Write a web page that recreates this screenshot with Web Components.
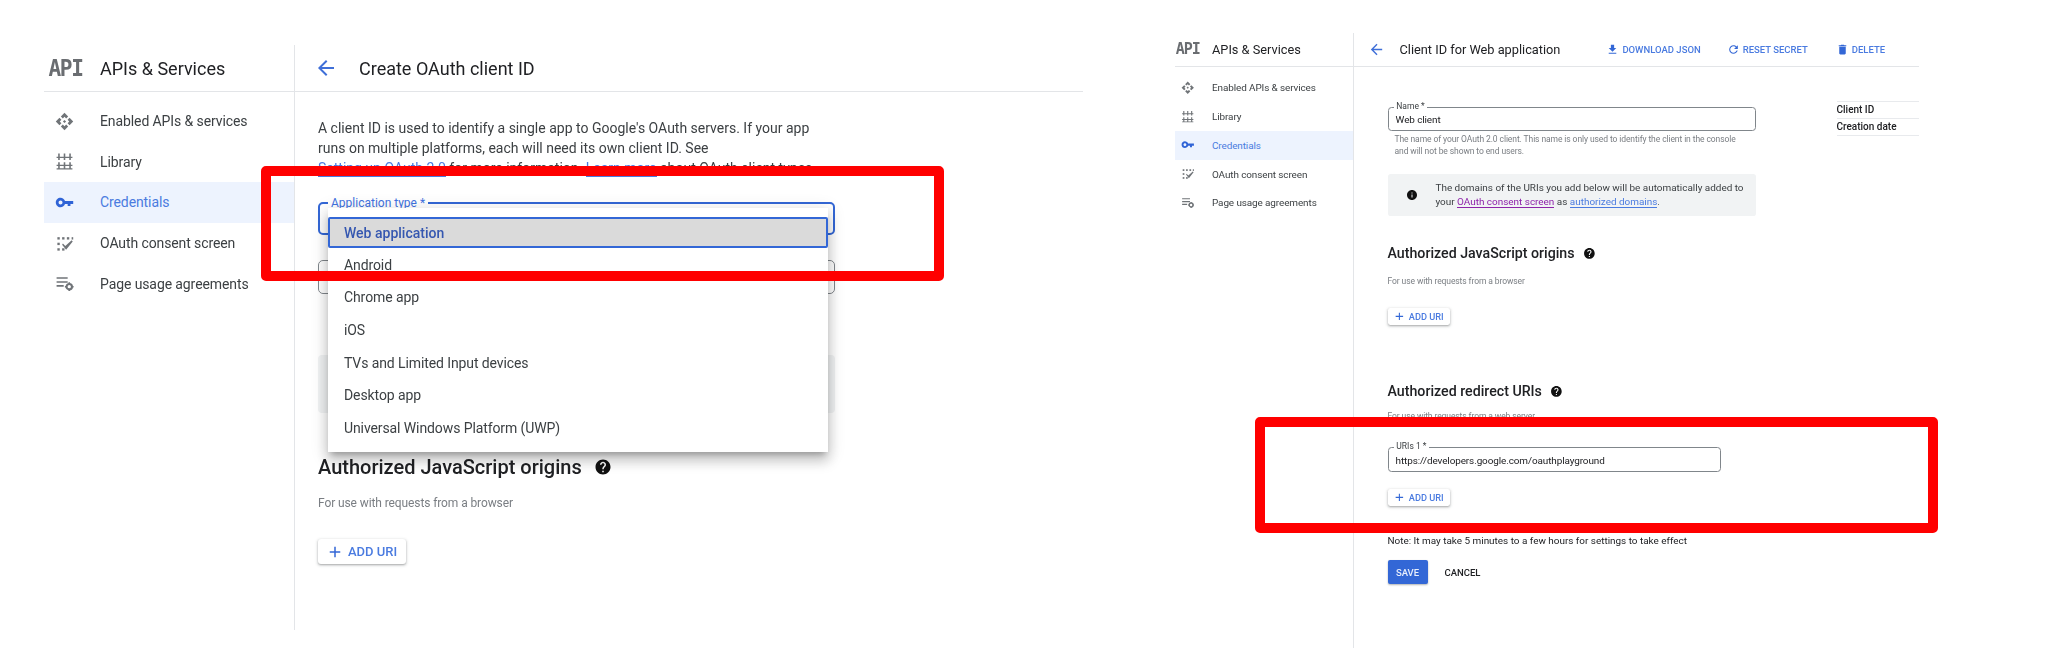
<!DOCTYPE html>
<html lang="en"><head><meta charset="utf-8"><title>OAuth client setup</title>
<style>html,body{margin:0;padding:0;background:#fff}body{font-family:Roboto,"Liberation Sans",sans-serif}</style>
</head><body>
<app-page>
  <console-panel id="create" title-text="Create OAuth client ID" style="--k:1;--top:45px;--left:44px;--width:1039px;--height:585px;--pad:23px;--main-top:26px;--arrow-l:19px;--title-l:64px;--ni-l:11px;--nt-x:56px;--nav-top:9px">
    <nav-item icon="api">Enabled APIs &amp; services</nav-item>
    <nav-item icon="library">Library</nav-item>
    <nav-item icon="key" active>Credentials</nav-item>
    <nav-item icon="consent">OAuth consent screen</nav-item>
    <nav-item icon="usage">Page usage agreements</nav-item>
    <div slot="main" style="width:517px">
      <body-text style="--lh:20px">A client ID is used to identify a single app to Google's OAuth servers. If your app runs on multiple platforms, each will need its own client ID. See <a-link>Setting up OAuth 2.0</a-link> for more information. <a-link>Learn more</a-link> about OAuth client types.</body-text>
      <text-field focus style="margin-top:24px;--h:33px"><span slot="label">Application type *</span></text-field>
      <text-field style="margin-top:25px;--h:34px"><span slot="label"></span></text-field>
      <notice-box style="margin-top:61px;height:58px"></notice-box>
      <section-head style="margin-top:42px">Authorized JavaScript origins</section-head>
      <sub-text style="margin-top:16px">For use with requests from a browser</sub-text>
      <add-button style="margin-top:28px">ADD URI</add-button>
    </div>
    <drop-menu slot="main" style="left:33px;top:116px;width:500px">
      <menu-option selected>Web application</menu-option>
      <menu-option>Android</menu-option>
      <menu-option>Chrome app</menu-option>
      <menu-option>iOS</menu-option>
      <menu-option>TVs and Limited Input devices</menu-option>
      <menu-option>Desktop app</menu-option>
      <menu-option>Universal Windows Platform (UWP)</menu-option>
    </drop-menu>
  </console-panel>

  <console-panel id="edit" title-text="Client ID for Web application" style="--k:.71;--top:33px;--left:1175px;--width:744px;--height:615px;--pad:34px;--main-top:40px;--arrow-l:14px;--title-l:46px;--ni-l:6px;--nt-x:37px;--nav-top:6.5px">
    <nav-item icon="api">Enabled APIs &amp; services</nav-item>
    <nav-item icon="library">Library</nav-item>
    <nav-item icon="key" active>Credentials</nav-item>
    <nav-item icon="consent">OAuth consent screen</nav-item>
    <nav-item icon="usage">Page usage agreements</nav-item>
    <head-action slot="actions" icon="download" style="margin-left:46px">DOWNLOAD JSON</head-action>
    <head-action slot="actions" icon="refresh" style="margin-left:26px">RESET SECRET</head-action>
    <head-action slot="actions" icon="delete" style="margin-left:28px">DELETE</head-action>
    <div slot="main" style="display:flex;gap:81px;align-items:flex-start">
      <div style="width:368px;flex:none">
        <text-field style="--h:24px"><span slot="label">Name *</span>Web client</text-field>
        <sub-text style="margin:3.5px 0 0 7px;width:345px;--lh:11.5px">The name of your OAuth 2.0 client. This name is only used to identify the client in the console and will not be shown to end users.</sub-text>
        <notice-box style="margin-top:17px;height:42px">
          <svg-icon name="info" style="--size:12px;color:#111;margin-left:18px;flex:none"></svg-icon>
          <body-text style="margin-left:18px;--lh:14.5px">The domains of the URIs you add below will be automatically added to your <a-link style="--c:#8e24aa">OAuth consent screen</a-link> as <a-link>authorized domains</a-link>.</body-text>
        </notice-box>
        <section-head style="margin-top:29px">Authorized JavaScript origins</section-head>
        <sub-text style="margin-top:14px">For use with requests from a browser</sub-text>
        <add-button style="margin-top:20px">ADD URI</add-button>
        <section-head style="margin-top:58px">Authorized redirect URIs</section-head>
        <sub-text style="margin-top:11px">For use with requests from a web server</sub-text>
        <text-field style="margin-top:24px;width:333px;--h:25px"><span slot="label">URIs 1 *</span>https://developers.google.com/oauthplayground</text-field>
        <add-button style="margin-top:17px">ADD URI</add-button>
        <body-text style="margin-top:28px;--lh:14px;color:#202124;white-space:nowrap">Note: It may take 5 minutes to a few hours for settings to take effect</body-text>
        <div style="display:flex;align-items:center;gap:17px;margin-top:12px">
          <save-button>SAVE</save-button><cancel-button>CANCEL</cancel-button>
        </div>
      </div>
      <info-table style="margin-top:-6px;flex:1">
        <info-row>Client ID</info-row>
        <info-row>Creation date</info-row>
      </info-table>
    </div>
  </console-panel>

  <red-box style="left:261px;top:166px;width:683px;height:115px"></red-box>
  <red-box style="left:1255px;top:417px;width:683px;height:116px"></red-box>
</app-page>

<script>
const ICONS = {
  api:'<path d="M14 12l-2 2-2-2 2-2 2 2zm-2-6l2.12 2.12 2.5-2.5L12 1 7.38 5.62l2.5 2.5L12 6zm-6 6l2.12-2.12-2.5-2.5L1 12l4.62 4.62 2.5-2.5L6 12zm12 0l-2.12 2.12 2.5 2.5L23 12l-4.62-4.62-2.5 2.5L18 12zm-6 6l-2.12-2.12-2.5 2.5L12 23l4.62-4.62-2.5-2.5L12 18z"/>',
  library:'<path d="M4 2h2v8H4zM11 2h2v8h-2zM18 2h2v8h-2zM2 6h20v1.6H2zM4 13h2v9H4zM11 13h2v9h-2zM18 13h2v9h-2zM2 16h20v1.6H2zM2 20.4h20V22H2z"/>',
  key:'<path d="M12.65 10C11.83 7.67 9.61 6 7 6c-3.31 0-6 2.69-6 6s2.69 6 6 6c2.61 0 4.83-1.67 5.65-4H16v2.5h3.5V14H23v-4H12.65zM7 14.5c-1.38 0-2.5-1.12-2.5-2.5S5.62 9.500 7 9.500 9.500 10.620 9.500 12 8.380 14.500 7 14.500z"/>',
  consent:'<g><rect x="3" y="4" width="3" height="3"/><rect x="9" y="4" width="3" height="3"/><rect x="15" y="4" width="3" height="3"/><rect x="21" y="4" width="2" height="3"/><rect x="3" y="11" width="3" height="3"/><rect x="3" y="18" width="3" height="3"/><rect x="9" y="18" width="3" height="3"/></g><path d="M10 12l3 3 8-7 1.400 1.400L14 20l-5-6.500z"/>',
  usage:'<path d="M2 4h14v2H2zM2 9h14v2H2zM2 14h9v2H2z"/><circle cx="18" cy="16" r="3.400" fill="none" stroke="currentColor" stroke-width="2.600"/><path d="M17 10.500h2v2h-2zM17 19.500h2v2h-2zM12.500 15h2v2h-2zM21.500 15h2v2h-2z"/>',
  back:'<path d="M20 11H7.830l5.590-5.590L12 4l-8 8 8 8 1.410-1.410L7.830 13H20v-2z"/>',
  help:'<path d="M12 2C6.480 2 2 6.480 2 12s4.480 10 10 10 10-4.480 10-10S17.520 2 12 2zm1 17h-2v-2h2v2zm2.070-7.750l-.9.920C13.450 12.900 13 13.500 13 15h-2v-.5c0-1.100.450-2.100 1.170-2.830l1.240-1.260c.370-.360.590-.860.590-1.410 0-1.100-.9-2-2-2s-2 .9-2 2H8c0-2.210 1.790-4 4-4s4 1.790 4 4c0 .880-.360 1.680-.930 2.250z"/>',
  info:'<path d="M12 2C6.480 2 2 6.480 2 12s4.480 10 10 10 10-4.480 10-10S17.520 2 12 2zm1 15h-2v-6h2v6zm0-8h-2V7h2v2z"/>',
  download:'<path d="M19 9h-4V3H9v6H5l7 7 7-7zM5 18v2h14v-2H5z"/>',
  refresh:'<path d="M17.650 6.350C16.200 4.900 14.210 4 12 4c-4.420 0-7.990 3.580-7.990 8s3.570 8 7.990 8c3.730 0 6.840-2.550 7.730-6h-2.080c-.820 2.330-3.040 4-5.650 4-3.310 0-6-2.690-6-6s2.690-6 6-6c1.660 0 3.140.690 4.220 1.780L13 11h7V4l-2.350 2.350z"/>',
  delete:'<path d="M6 19c0 1.100.9 2 2 2h8c1.100 0 2-.9 2-2V7H6v12zM19 4h-3.500l-1-1h-5l-1 1H5v2h14V4z"/>',
  plus:'<path d="M19 13h-6v6h-2v-6H5v-2h6V5h2v6h6v2z"/>'
};
function comp(tag, html, setup){
  customElements.define(tag, class extends HTMLElement{
    constructor(){super();this.attachShadow({mode:'open'}).innerHTML=html;}
    connectedCallback(){ if(setup) setup(this); }
  });
}
const FONT='font-family:Roboto,"Liberation Sans",sans-serif;';
comp('app-page',`<style>:host{display:flex;align-items:flex-start;position:relative;width:2048px;height:672px;overflow:hidden;background:#fff;${FONT}}</style><slot></slot>`);
comp('svg-icon',`<style>:host{display:inline-flex;width:var(--size,24px);height:var(--size,24px)}svg{width:100%;height:100%;fill:currentColor;display:block}</style><svg viewBox="0 0 24 24"></svg>`,
  el=>{el.shadowRoot.querySelector('svg').innerHTML=ICONS[el.getAttribute('name')]||'';});
comp('console-panel',`<style>
:host{position:absolute;left:var(--left);top:var(--top);width:var(--width);height:var(--height);display:block;filter:blur(.45px);color:#202124}
.grid{display:grid;grid-template-columns:calc(var(--k)*250px + 1px) 1fr;grid-template-rows:calc(var(--k)*46px + 1px) 1fr;height:100%}
.brand{display:flex;align-items:center;border-bottom:1px solid #e3e5e8;border-right:1px solid #e3e5e8;box-sizing:border-box;position:relative}
.api{font:700 calc(var(--k)*23px)/1 "DejaVu Sans Mono",monospace;color:#6a6d71;letter-spacing:calc(var(--k)*-1.6px);width:var(--nt-x);padding-left:calc(var(--nt-x) - var(--k)*51px);box-sizing:border-box;flex:none;transform:scaleX(.92);transform-origin:left}
.brand-title{font-size:calc(var(--k)*18px);white-space:nowrap}
.head{display:flex;align-items:center;border-bottom:1px solid #e3e5e8;position:relative}
.arrow{margin-left:var(--arrow-l);color:#3f6fd8;--size:calc(var(--k)*24px);position:absolute;left:0}
.title{margin-left:var(--title-l);font-size:calc(var(--k)*18px);white-space:nowrap}
.actions{display:flex;align-items:center}
.side{border-right:1px solid #e3e5e8;padding-top:var(--nav-top);box-sizing:border-box}
.main{position:relative;padding:var(--main-top) 0 0 var(--pad)}
</style>
<div class="grid">
<div class="brand"><span class="api">API</span><span class="brand-title">APIs &amp; Services</span></div>
<div class="head"><svg-icon class="arrow" name="back"></svg-icon><span class="title"></span><span class="actions"><slot name="actions"></slot></span></div>
<div class="side"><slot></slot></div>
<div class="main"><slot name="main"></slot></div>
</div>`,el=>{el.shadowRoot.querySelector('.title').textContent=el.getAttribute('title-text');});
comp('nav-item',`<style>
:host{display:flex;align-items:center;height:calc(var(--k)*40.6px);font-size:calc(var(--k)*14px);color:#3c4043;white-space:nowrap;position:relative;letter-spacing:-.1px}
:host([active]){background:#edf3fe;color:#4a7be0}
svg-icon{position:absolute;left:var(--ni-l);--size:calc(var(--k)*19px);color:#707478;}
:host([active]) svg-icon{color:#2f63d6}
span{margin-left:var(--nt-x)}
</style><svg-icon></svg-icon><span><slot></slot></span>`,el=>{
  const i=el.shadowRoot.querySelector('svg-icon');
  i.setAttribute('name',el.getAttribute('icon'));
  i.shadowRoot.querySelector('svg').innerHTML=ICONS[el.getAttribute('icon')];
});
comp('body-text',`<style>:host{display:block;font-size:calc(var(--k)*14px);line-height:var(--lh,20px);color:#3c4043}</style><slot></slot>`);
comp('a-link',`<style>:host{display:inline;color:var(--c,#4a7be0);border-bottom:1px solid var(--c,#4a7be0);white-space:nowrap}</style><slot></slot>`);
comp('sub-text',`<style>:host{display:block;font-size:calc(var(--k)*12px);line-height:var(--lh,calc(var(--k)*16px));color:#7a7e83;letter-spacing:-.1px}</style><slot></slot>`);
comp('text-field',`<style>
:host{display:block;position:relative;height:var(--h);box-sizing:border-box;border:1px solid #80868b;border-radius:calc(var(--k)*5px);font-size:calc(var(--k)*14px);color:#202124}
:host([focus]){border:2px solid #3367d6}
.l{position:absolute;left:calc(var(--k)*8px);top:calc(var(--k)*-8px);background:#fff;padding:0 calc(var(--k)*3px);font-size:calc(var(--k)*12px);line-height:calc(var(--k)*14px);color:#3c4043;white-space:nowrap}
:host([focus]) .l{color:#3f72e0}
.v{display:flex;align-items:center;height:100%;padding:calc(var(--k)*3px) calc(var(--k)*10px) 0;box-sizing:border-box;white-space:nowrap;letter-spacing:-.1px}
</style><div class="l"><slot name="label"></slot></div><div class="v"><slot></slot></div>`);
comp('notice-box',`<style>:host{display:flex;align-items:center;background:#f1f3f4;border-radius:calc(var(--k)*4px)}</style><slot></slot>`);
comp('section-head',`<style>:host{display:flex;align-items:center;font-size:calc(var(--k)*20px);line-height:calc(var(--k)*24px);font-weight:500;color:#202124;white-space:nowrap}
svg-icon{--size:calc(var(--k)*18px);margin-left:calc(var(--k)*12px);color:#111}</style><slot></slot><svg-icon name="help"></svg-icon>`);
comp('add-button',`<style>:host{display:inline-flex;vertical-align:top;align-items:center;height:calc(var(--k)*25px);width:calc(var(--k)*88px);border-radius:calc(var(--k)*3px);background:#fff;box-shadow:0 1px 2px rgba(60,64,67,.35),0 1px 3px 1px rgba(60,64,67,.12);color:#4a7be0;font-size:calc(var(--k)*13px);font-weight:500;white-space:nowrap}
svg-icon{--size:calc(var(--k)*18px);margin:0 calc(var(--k)*4px) 0 calc(var(--k)*8px);color:#3367d6;flex:none}</style><svg-icon name="plus"></svg-icon><slot></slot>`);
comp('head-action',`<style>:host{display:inline-flex;align-items:center;color:#4a7be0;font-size:9.5px;font-weight:500;white-space:nowrap}
svg-icon{--size:13px;margin-right:3px;color:#3367d6}</style><svg-icon></svg-icon><slot></slot>`,el=>{
  el.shadowRoot.querySelector('svg-icon').shadowRoot.querySelector('svg').innerHTML=ICONS[el.getAttribute('icon')];
});
comp('save-button',`<style>:host{display:inline-flex;align-items:center;justify-content:center;width:40px;height:24px;background:#3367d6;color:#e8eefc;border-radius:2px;font-size:9.5px;font-weight:500;box-shadow:0 1px 2px rgba(60,64,67,.4)}</style><slot></slot>`);
comp('cancel-button',`<style>:host{display:inline-flex;align-items:center;font-size:9.5px;font-weight:500;color:#202124}</style><slot></slot>`);
comp('info-table',`<style>:host{display:block;border-top:1px solid #e8eaed}</style><slot></slot>`);
comp('info-row',`<style>:host{display:flex;align-items:center;height:17px;box-sizing:border-box;border-bottom:1px solid #e8eaed;font-size:10px;font-weight:500;color:#202124;white-space:nowrap}</style><slot></slot>`);
comp('drop-menu',`<style>:host{position:absolute;display:block;background:#fff;box-sizing:border-box;padding:7px 0 8px;box-shadow:0 5px 6px -3px rgba(0,0,0,.25),0 9px 12px 1px rgba(0,0,0,.16),0 3px 16px 2px rgba(0,0,0,.12)}</style><slot></slot>`);
comp('menu-option',`<style>:host{display:flex;align-items:center;height:32.600px;box-sizing:border-box;padding-left:16px;font-size:14px;color:#3c4043;white-space:nowrap;letter-spacing:-.1px}
:host([selected]){background:#dadada;border:2px solid #3367d6;border-radius:2px;height:31px;margin:2px 0 .6px;padding-left:14px;color:#3557b0;font-weight:500;letter-spacing:0}</style><slot></slot>`);
comp('red-box',`<style>:host{position:absolute;box-sizing:border-box;border:10px solid #ff0000;border-radius:5px;display:block;pointer-events:none}</style>`);
</script>
</body></html>
